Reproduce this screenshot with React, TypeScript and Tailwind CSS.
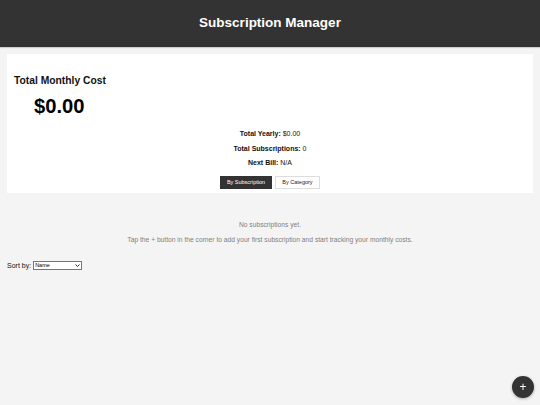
import React from "react";

const font = { fontFamily: '"Liberation Sans", Arial, sans-serif' };

function StatLine({ label, value }: { label: string; value: string }) {
  return (
    <p className="h-[14.5px] text-[7px] leading-[14.5px] text-[#111]">
      <span className="font-bold">{label}</span> {value}
    </p>
  );
}

export default function App() {
  return (
    <div className="relative min-h-[405px] bg-[#f4f4f4]" style={font}>
      <header className="flex h-[47px] items-center justify-center bg-[#333333] shadow-[0_1px_1px_rgba(0,0,0,0.15)]">
        <h1 className="text-[13.5px] font-bold text-white">Subscription Manager</h1>
      </header>

      <main className="px-[7px] pt-[7px]">
        <section className="bg-white pb-[4px] pt-[20px]">
          <h2 className="pl-[7px] text-[10.3px] font-bold leading-[13px] text-[#111]">Total Monthly Cost</h2>
          <div className="mt-[7px] pl-[27px] text-[20.2px] font-bold leading-[24px] text-black">$0.00</div>
          <div className="mt-[9px] flex flex-col items-center">
            <StatLine label="Total Yearly:" value="$0.00" />
            <StatLine label="Total Subscriptions:" value="0" />
            <StatLine label="Next Bill:" value="N/A" />
            <div className="mt-[5px] flex gap-[3px]">
              <button className="h-[13px] w-[52px] border border-[#333] bg-[#333] text-[5.5px] text-white">
                By Subscription
              </button>
              <button className="h-[13px] w-[45px] border border-[#ddd] bg-white text-[5.5px] text-[#222]">
                By Category
              </button>
            </div>
          </div>
        </section>

        <div className="mt-[27px] flex flex-col items-center text-[6.7px] text-[#808080]">
          <p className="leading-[10px]">No subscriptions yet.</p>
          <p className="mt-[5px] leading-[10px]">
            Tap the + button in the corner to add your first subscription and start tracking your monthly costs.
          </p>
        </div>

        <div className="mt-[16px] flex items-center gap-[2px] text-[7px] text-[#111]">
          <label htmlFor="sort">Sort by:</label>
          <div className="relative">
            <select
              id="sort"
              defaultValue="name"
              className="block h-[9px] w-[49px] appearance-none border border-[#767676] bg-white px-[1px] text-[5.5px] leading-[7px] text-black"
            >
              <option value="name">Name</option>
              <option value="cost">Cost</option>
              <option value="date">Next Bill</option>
            </select>
            <svg
              className="pointer-events-none absolute right-[2px] top-[3px] h-[3px] w-[5px]"
              viewBox="0 0 5 3"
              fill="none"
              stroke="#222"
              strokeWidth="1"
            >
              <path d="M0.5 0.5 L2.5 2.5 L4.5 0.5" />
            </svg>
          </div>
        </div>
      </main>

      <button className="fixed bottom-[7px] right-[6px] flex h-[22px] w-[22px] items-center justify-center rounded-full bg-[#333] text-[12px] leading-none text-white shadow-[0_1px_3px_rgba(0,0,0,0.3)]">
        +
      </button>
    </div>
  );
}
